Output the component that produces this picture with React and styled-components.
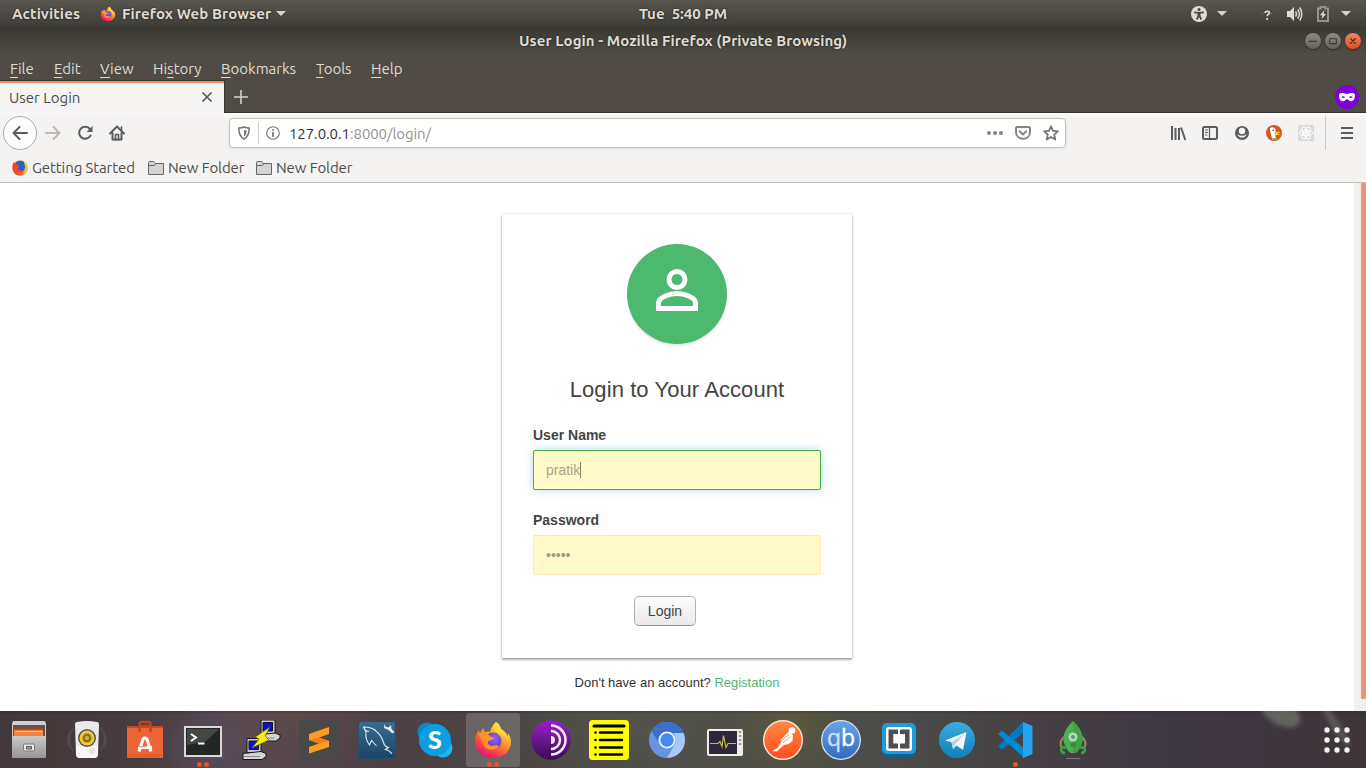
import React from 'react';
import styled, { createGlobalStyle, css } from 'styled-components';

const GlobalStyle = createGlobalStyle`
  *, *::before, *::after { box-sizing: border-box; }
  html, body { margin: 0; padding: 0; overflow: hidden; background: #fff; }
  svg { display: block; flex: none; }
`;

const uiFont = '"Ubuntu", "Noto Sans", "Open Sans", sans-serif';
const pageFont = '"Liberation Sans", Arial, sans-serif';

const Desktop = styled.div`
  width: 1366px;
  height: 768px;
  display: flex;
  flex-direction: column;
  overflow: hidden;
  font-family: ${uiFont};
  font-size: 15px;
  white-space: nowrap;
`;

/* ---------- top panel ---------- */
const Panel = styled.header`
  height: 27px;
  flex: none;
  display: grid;
  grid-template-columns: 1fr 88px 1fr;
  align-items: center;
  background: linear-gradient(#595650, #3f3d38);
  color: #dfdbd2;
  font-weight: 700;
  text-shadow: 0 0 2px rgba(0, 0, 0, 0.7);
`;
const PanelSide = styled.div`
  display: flex;
  align-items: center;
  height: 26px;
  justify-content: ${(p) => (p.$end ? 'flex-end' : 'flex-start')};
`;
const Activities = styled.span`
  width: 88px;
  padding-left: 12px;
  letter-spacing: 0.14px;
`;
const AppMenu = styled.span`
  display: flex;
  align-items: center;
  margin-left: 12px;
`;
const AppName = styled.span`
  width: 149px;
  margin: 0 5px 0 6px;
  letter-spacing: 0.11px;
`;
const Clock = styled.span`
  white-space: pre;
  margin-top: -1px;
`;
const Caret = styled.i`
  width: 0;
  height: 0;
  border: 5px solid transparent;
  border-bottom: 0;
  border-top-color: #d6d2ca;
`;
const StatusGap = styled.span`
  width: ${(p) => p.$w}px;
  flex: none;
`;

/* ---------- window title and menus ---------- */
const TitleBar = styled.div`
  height: 27px;
  flex: none;
  display: grid;
  grid-template-columns: 1fr 328px 1fr;
  align-items: center;
  background: linear-gradient(#393833, #4f4c45);
  color: #dfdbd2;
  font-weight: 700;
  letter-spacing: 0.06px;
  text-shadow: 0 0 2px rgba(0, 0, 0, 0.6);
`;
const WindowButtons = styled.div`
  display: flex;
  justify-content: flex-end;
  gap: 4px;
  padding-right: 5px;
`;
const WindowButton = styled.span`
  width: 16px;
  height: 16px;
  border-radius: 50%;
  display: grid;
  place-items: center;
  background: ${(p) => (p.$close ? 'linear-gradient(#f28561, #e04f1e)' : 'linear-gradient(#8c8981, #65635d)')};
  box-shadow: 0 0 0 0.5px #33312d, 0 1px 1px rgba(0, 0, 0, 0.4);
`;
const MenuBar = styled.nav`
  height: 26px;
  flex: none;
  display: flex;
  align-items: center;
  padding: 2px 0 0 10px;
  background: #504c45;
  color: #dfdbd2;
`;
const MenuItem = styled.span`
  width: ${(p) => p.$w}px;
  u {
    text-underline-offset: 3px;
    text-decoration-thickness: 1px;
  }
`;

/* ---------- tabs ---------- */
const TabStrip = styled.div`
  height: 33px;
  flex: none;
  display: flex;
  background: #504c45;
  box-shadow: inset 0 -1px #38352f;
`;
const Tab = styled.div`
  width: 225px;
  height: 33px;
  display: flex;
  align-items: center;
  justify-content: space-between;
  padding: 0 11px 0 9px;
  border-top: 1px solid #3b3833;
  border-right: 1px solid #38352f;
  background: linear-gradient(#f38764 2px, #f5f4f2 2px);
  color: #4c4c4c;
`;
const NewTab = styled.div`
  width: 32px;
  display: grid;
  place-items: center;
`;
const PrivateBadge = styled.div`
  margin-left: auto;
  padding: 5px 7px 0 0;
`;

/* ---------- navigation ---------- */
const Chrome = styled.div`
  height: 70px;
  flex: none;
  border-bottom: 1px solid #c7c1bc;
  background: linear-gradient(#faf8f8, #f4f3f1 6px);
  color: #4c4c4c;
`;
const NavBar = styled.div`
  height: 40px;
  display: flex;
  align-items: center;
`;
const BackButton = styled.span`
  width: 34px;
  height: 34px;
  margin-left: 3px;
  border: 1px solid #aeaba8;
  border-radius: 50%;
  display: grid;
  place-items: center;
  background: #fdfdfd;
`;
const Slot = styled.span`
  width: ${(p) => p.$w || 32}px;
  height: 32px;
  display: grid;
  place-items: center;
  flex: none;
`;
const UrlBar = styled.div`
  width: 837px;
  height: 30px;
  margin: 0 96px;
  display: flex;
  align-items: center;
  background: #fff;
  border: 1px solid #c6c0bb;
  border-radius: 4px;
  box-shadow: 0 1px 4px rgba(0, 0, 0, 0.06);
`;
const Divider = styled.span`
  width: 1px;
  height: ${(p) => p.$h}px;
  background: #cfccc9;
  flex: none;
`;
const Url = styled.span`
  flex: 1;
  padding: 1px 0 0 2px;
  color: #929292;
  letter-spacing: -0.1px;
  b {
    font-weight: 400;
    color: #333;
  }
`;
const Bookmarks = styled.div`
  height: 29px;
  display: flex;
  align-items: center;
  padding-left: 12px;
`;
const Bookmark = styled.span`
  display: flex;
  align-items: center;
  gap: 4px;
  width: ${(p) => p.$w}px;
  letter-spacing: -0.1px;
`;

/* ---------- web page ---------- */
const Viewport = styled.main`
  height: 528px;
  flex: none;
  display: flex;
  background: #fff;
  font-family: ${pageFont};
`;
const Page = styled.div`
  flex: 1;
  display: flex;
  flex-direction: column;
  align-items: center;
  padding-top: 31px;
`;
const ScrollTrack = styled.div`
  width: 12px;
  padding-left: 7px;
  background: #f1f0ee;
`;
const ScrollThumb = styled.div`
  height: 516px;
  background: #f29170;
  border-radius: 0 0 1px 1px;
`;
const Card = styled.section`
  width: 350px;
  height: 444px;
  padding: 30px 31px;
  display: flex;
  flex-direction: column;
  background: #fff;
  box-shadow: 0 2px 2px rgba(0, 0, 0, 0.3), 0 0 2px rgba(0, 0, 0, 0.22);
  color: #444;
`;
const Avatar = styled.div`
  width: 100px;
  height: 100px;
  margin: 0 auto;
  padding-top: 17px;
  border-radius: 50%;
  display: flex;
  justify-content: center;
  background: #4cb96f;
  box-shadow: 0 2px 2px rgba(0, 0, 0, 0.1);
`;
const Heading = styled.h1`
  margin: 33px 0 0;
  font-size: 22px;
  line-height: 26px;
  font-weight: 400;
  letter-spacing: 0.08px;
  text-align: center;
  color: #444;
`;
const Field = styled.label`
  display: block;
  margin-top: ${(p) => p.$top}px;
  font-size: 14px;
`;
const FieldLabel = styled.span`
  display: block;
  font-weight: 700;
  line-height: 20px;
  margin-bottom: 5px;
`;
const FieldBox = styled.span`
  display: flex;
  align-items: center;
  height: 40px;
  padding: 0 12px;
  border: 1px solid #ffe9b0;
  border-radius: 2px;
  background: #fffac8;
  color: #a39c82;
  ${(p) =>
    p.$focused &&
    css`
      border-color: #3db33f;
      color: #aca68c;
      box-shadow: 0 0 8px rgba(82, 168, 220, 0.45);
    `}
`;
const TextCaret = styled.i`
  width: 1px;
  height: 16px;
  background: #8c8874;
`;
const LoginButton = styled.button`
  width: 62px;
  height: 30px;
  margin: 21px 0 0 101px;
  padding: 0;
  border: 1px solid #b4b2b0;
  border-bottom-color: #929090;
  border-radius: 5px;
  background: linear-gradient(#fdfdfd, #ebe9e9);
  color: #444;
  font: 14px ${pageFont};
`;
const SignupLine = styled.p`
  margin: 17px 0 0;
  font-size: 13px;
  line-height: 15px;
  color: #333;
  a {
    color: #4cb96f;
  }
`;

/* ---------- dock ---------- */
const DockBar = styled.footer`
  position: relative;
  overflow: hidden;
  height: 57px;
  flex: none;
  display: flex;
  align-items: flex-start;
  gap: 4px;
  padding: 2px 2px 0;
  background:
    linear-gradient(rgba(30, 28, 26, 0.28), transparent 3px),
    radial-gradient(ellipse 60px 60px at 790px 12px, rgba(100, 96, 55, 0.65), transparent),
    radial-gradient(ellipse 110px 50px at 620px 20px, rgba(92, 91, 84, 0.55), transparent),
    radial-gradient(ellipse 90px 60px at 290px 10px, rgba(105, 78, 72, 0.5), transparent),
    radial-gradient(ellipse 60px 40px at 215px 35px, rgba(94, 82, 104, 0.6), transparent),
    linear-gradient(90deg, #44383a 0, #463b3d 120px, #534650 230px, #4c4044 400px, #4a4744 560px, #505049 720px, #4c4b48 900px, #453e42 1050px, #3e3843 1180px, #3f3539 1366px);

  /* blurred leaf and grass blade of the wallpaper */
  &::before,
  &::after {
    content: '';
    position: absolute;
    filter: blur(2px);
  }
  &::before {
    left: 1260px;
    top: -10px;
    width: 42px;
    height: 24px;
    border-radius: 50%;
    transform: rotate(28deg);
    background: rgba(124, 128, 116, 0.6);
  }
  &::after {
    left: 1331px;
    top: -12px;
    width: 9px;
    height: 52px;
    border-radius: 50%;
    transform: rotate(-33deg);
    background: rgba(125, 128, 132, 0.42);
  }
`;
const DockTile = styled.div`
  width: 54px;
  height: 54px;
  flex: none;
  display: grid;
  grid-template-rows: 42px 5px;
  justify-items: center;
  padding-top: 7px;
  border-radius: 3px;
  background: ${(p) => (p.$active ? 'rgba(255, 255, 255, 0.18)' : 'transparent')};
`;
const RunDots = styled.div`
  display: flex;
  align-items: flex-start;
  gap: 2px;
  i {
    width: 5px;
    height: 5px;
    border-radius: 50%;
    background: #e95420;
  }
`;
const AppsButton = styled.div`
  margin-left: auto;
  width: 54px;
  height: 54px;
  display: grid;
  place-items: center;
  position: relative;
  z-index: 1;
`;

/* ---------- icons ---------- */
const FirefoxIcon = ({ size }) => (
  <svg width={size} height={size} viewBox="0 0 40 40">
    <defs>
      <linearGradient id="ffBody" x1="0.8" y1="0.05" x2="0.25" y2="0.95">
        <stop offset="0" stopColor="#fff14a" />
        <stop offset="0.4" stopColor="#ffa12b" />
        <stop offset="0.72" stopColor="#ff4a3e" />
        <stop offset="1" stopColor="#e5127e" />
      </linearGradient>
      <radialGradient id="ffGlobe" cx="0.6" cy="0.35" r="0.7">
        <stop offset="0" stopColor="#8e63f5" />
        <stop offset="1" stopColor="#5936b4" />
      </radialGradient>
    </defs>
    <path fill="url(#ffBody)" d="M23 2c3 2 4.500 4.500 5 7 3 1.500 5.500 4 6.500 7 .5-1 .5-2 .3-3C37 16 38 19 38 22c0 9-7.500 16-18 16S2 31 2 22c0-5 1.500-9 4-12 .2 1.500.5 2.500 1 3.500C8 11.500 9 9 10.500 8c0 1.500.5 3 1.500 4 2-.5 3.500-.5 5 0 1-4 3-7.500 6-10Z" />
    <circle cx="20" cy="21" r="8.500" fill="url(#ffGlobe)" />
    <path fill="#ff9129" d="M5 14c4-2 9-1.500 12 2l4 2c-1 2-3 2-4.500 2.500-1.500.5-2 2-1.500 3 .8 1.800 3 3 6 2 2-.6 4-.5 5 .5-3 5-12 5-15 0C8.500 22.500 8 17 5 14Z" />
    <path fill="#ffd83f" d="M23 2c3 2 4.500 4.500 5 7 4 2 7 7 7 13-1-3-3-6-6-8-4-2-7-2-8-4-.8-2 .2-5 2-8Z" />
  </svg>
);

const OldFirefoxIcon = () => (
  <svg width="16" height="16" viewBox="0 0 16 16">
    <defs>
      <linearGradient id="ffOld" x1="1" y1="0" x2="0" y2="0.9">
        <stop offset="0" stopColor="#ffd42e" />
        <stop offset="0.45" stopColor="#ff9418" />
        <stop offset="1" stopColor="#f0214a" />
      </linearGradient>
    </defs>
    <circle cx="8" cy="8" r="7.700" fill="url(#ffOld)" />
    <path d="M4 2.500Q7.500-.5 11.500 1.600q2.500 2.900 1.500 6.400-1.500 4-5 4T4 8.500z" fill="#1966d2" />
    <path fill="#f24528" d="M.6 6.500c0-2 .6-3.500 1.500-4.500.2 1.200 1 1.500 2 1.700l2 .3C5 5 5.500 6 7.500 6.500 6 7.200 5.500 8 6 9c1 1.600 3.400 1.200 4.500.5-.5 2-2 2.700-3.500 2.700C3.500 12.200 1 10 .6 6.500Z" />
    <path fill="#ffbf26" d="M11.500 1.500c3.800 2 5 6.500 3.400 9.700-1 2-2.900 3.200-4.900 3.600 2.300-1.800 3.500-4.500 3-7.500-.2-2-.7-4.300-1.500-5.800Z" />
  </svg>
);

const AccessIcon = () => (
  <svg width="16" height="16" viewBox="0 0 16 16">
    <circle cx="8" cy="8" r="8" fill="#dfdbd2" />
    <circle cx="8" cy="3.500" r="1.500" fill="#484641" />
    <path d="M3.200 6.300 8 6.900l4.800-.6M8 6.500V10M8 9l-2.300 4.500M8 9l2.300 4.500" stroke="#484641" strokeWidth="1.700" fill="none" />
    <path d="M6.600 6.500h2.800v3.700H6.600z" fill="#484641" />
  </svg>
);
const VolumeIcon = () => (
  <svg width="16" height="16" viewBox="0 0 16 16" fill="none" stroke="#dfdbd2" strokeWidth="1.500">
    <path d="M0 5h3l4-4v14l-4-4H0z" fill="#dfdbd2" stroke="none" />
    <path d="M8.500 5.500q2 2.500 0 5M10.700 3.500q3.400 4.500 0 9M12.800 1.500q4 6.500 0 13" />
  </svg>
);
const BatteryIcon = () => (
  <svg width="12" height="16" viewBox="0 0 12 16">
    <path d="M3.500 1v1.500H1V15h10V2.500H8.500V1z" fill="none" stroke="#96938c" strokeWidth="2" />
    <path d="M7.500 4 3 9.200h2.500L4.500 13 9 8H6.500z" fill="#e9e5dd" />
  </svg>
);
const MaskIcon = () => (
  <svg width="24" height="24" viewBox="0 0 24 24">
    <circle cx="12" cy="12" r="12" fill="#8000d7" />
    <path fillRule="evenodd" fill="#fff" d="M4 10C4 8.300 6 8 8 8c1.700 0 2.800.9 4 .9S14.300 8 16 8c2 0 4 .3 4 2 0 3.500-1.300 6.300-4 6.300-1.900 0-2.700-2-4-2s-2.100 2-4 2C5.300 16.300 4 13.500 4 10Zm2.300 2.300c1.300 1 2.700 1 3.900 0-1.100-1.500-2.800-1.500-3.900 0Zm7.500 0c1.200 1 2.600 1 3.900 0-1.100-1.500-2.800-1.500-3.900 0Z" />
  </svg>
);
const Glyph = ({ children, color = '#5c5c5c', size = 16, sw = 2 }) => (
  <svg width={size} height={size} viewBox="0 0 16 16" fill="none" stroke={color} strokeWidth={sw} strokeLinecap="round" strokeLinejoin="round">
    {children}
  </svg>
);
const FolderIcon = () => (
  <svg width="16" height="14" viewBox="0 0 16 14">
    <path d="M.5 13.500V1.500q0-1 1-1h4q.7 0 1 1l.5 1h8.500v11z" fill="#d5d3d1" stroke="#666" />
    <path d="M1 4.500h5.500l1-1.500" fill="none" stroke="#666" />
  </svg>
);
const DuckIcon = () => (
  <svg width="16" height="16" viewBox="0 0 16 16">
    <circle cx="8" cy="8" r="8" fill="#de4f2c" />
    <path d="M3.800 3.800c1.200-2.300 4.900-1.800 5.700.7.600 2-.3 3.500-.3 5l1 4.500-3.700.5C5.500 12 4.700 9 4.300 6.500Z" fill="#fff" />
    <path d="M8.500 7.500c1.500-.7 4-.9 5.500-.4-.5 1.200-2 1.200-3 1.500 1 .5 2 .5 2.800.3-.5 1.500-3.500 1.400-4.900.6z" fill="#fdd20a" />
    <path d="m6.500 13.300 5-.6-.2 2.300-4.500.4z" fill="#65bc46" />
    <circle cx="7.200" cy="5.300" r=".8" fill="#2d4f8e" />
  </svg>
);
const ReactIcon = () => (
  <svg width="16" height="16" viewBox="0 0 16 16" fill="none" stroke="#fff" strokeWidth="1">
    <path fill="#dcdcdb" stroke="none" d="M0 0h16v16H0z" />
    <ellipse cx="8" cy="8" rx="6.700" ry="2.700" />
    <ellipse cx="8" cy="8" rx="6.700" ry="2.700" transform="rotate(60 8 8)" />
    <ellipse cx="8" cy="8" rx="6.700" ry="2.700" transform="rotate(120 8 8)" />
    <circle cx="8" cy="8" r="1.300" fill="#fff" />
  </svg>
);

const Art = ({ children }) => (
  <svg width="40" height="40" viewBox="0 0 40 40">
    {children}
  </svg>
);

const FilesArt = () => (
  <Art>
    <defs>
      <linearGradient id="files" x1="0" y1="0" x2="0" y2="1">
        <stop offset="0" stopColor="#c9c9c9" />
        <stop offset="1" stopColor="#969696" />
      </linearGradient>
    </defs>
    <path d="M4 1h32l1 3v14H3V4z" fill="#cfcfcf" />
    <path d="M4 5h32v12H4z" fill="#5a5452" />
    <path d="M5 8h29l1 9H5z" fill="#a84a22" />
    <path d="M5 10h29v8H5z" fill="#f08642" />
    <path d="M7 11h26v1H7z" fill="#ffc49a" />
    <path d="M3 16h34v21q0 1-1 1H4q-1 0-1-1z" fill="url(#files)" />
    <rect x="14.500" y="24" width="11" height="7" rx="1" fill="#e8e8e8" stroke="#777" />
    <path d="M17.500 26.500h5v2.500h-5z" fill="#aaa" stroke="#555" />
  </Art>
);
const SpeakerArt = () => (
  <Art>
    <g fill="none" stroke="#5a7395" strokeWidth="1.200" opacity=".4">
      <path d="M6 8Q-1 19 6 31M3 12Q-1 19 3 28M34 8q7 11 0 23M37 12q4 8 0 16" />
    </g>
    <path d="M10 2q10-2 20 0 2 0 2 3l-1 29q0 4-4 4H13q-4 0-4-4L8 5q0-3 2-3z" fill="#e9e9e9" />
    <path d="M9 26h22v8q0 4-4 4H13q-4 0-4-4z" fill="#f8f8f8" />
    <circle cx="20" cy="18" r="9" fill="#555" />
    <circle cx="20" cy="18" r="7.500" fill="#f2ca2c" />
    <circle cx="20" cy="18" r="4.500" fill="#8b7416" />
    <circle cx="20" cy="18" r="2" fill="#c7b566" />
    <circle cx="25" cy="31" r="3.300" fill="#e4e4e4" />
  </Art>
);
const StoreArt = () => (
  <Art>
    <path d="M2 6.500h36V38H2z" fill="#eb6536" />
    <path d="M2 6.500h36v1.500H2z" fill="#c94a20" />
    <path d="M14.500 12V4q0-2 2-2h7q2 0 2 2v8M16 6h8" fill="none" stroke="#c5441d" strokeWidth="2.400" />
    <path d="m14 31.500 4-12.300q.5-1.200 2-1.200t2 1.200l4 12.300" fill="none" stroke="#fff" strokeWidth="3" />
    <path d="M13 27.500h14" stroke="#fff" strokeWidth="3" />
    <path d="M13 26.700h9" stroke="#eb6536" strokeWidth=".8" />
    <path d="M2 34h36v4H2z" fill="#e85a2c" opacity=".6" />
  </Art>
);
const TerminalArt = () => (
  <Art>
    <path d="M1 6h38v31H1z" fill="#dad9d7" />
    <path d="M3 8h34v27H3z" fill="#222625" />
    <path d="M4 9h32L22 22 4 25z" fill="#434746" />
    <path d="m8 14 5 3.500L8 21" fill="none" stroke="#fff" strokeWidth="2" />
    <path d="M15 23.500h6.500" stroke="#fff" strokeWidth="2" />
  </Art>
);
const PuttyPc = ({ x, y }) => (
  <g transform={`translate(${x} ${y})`} stroke="#161616">
    <path d="M6 1h14v14H6z" fill="#c9c9c9" />
    <path d="M8 3.500h9.500v8.500H8z" fill="#0d0de3" />
    <path d="m2 16 18-2 5 2v3l-4 3H2z" fill="#d5d5d5" />
    <path d="M3 19h16" stroke="#888" />
  </g>
);
const PuttyArt = () => (
  <Art>
    <PuttyPc x="14" y="-1" />
    <PuttyPc x="0" y="17.500" />
    <path d="M29 7 14 17l4 2-7 9 17-8-4-4z" fill="#f7ed13" stroke="#5a5700" strokeWidth=".7" />
  </Art>
);
const SublimeArt = () => (
  <Art>
    <rect width="40" height="40" rx="2" fill="#494949" />
    <path d="m10 14 20-7v7l-10 3.500 10 3.500v6L10 33.500V27l10-3.500L10 20z" fill="#ff9b22" />
    <path d="m10 20 10-2.500L30 21l-10 2.500z" fill="#ef8118" />
  </Art>
);
const WorkbenchArt = () => (
  <Art>
    <defs>
      <linearGradient id="wb" x1="0" y1="0" x2="0" y2="1">
        <stop offset="0" stopColor="#3a6b91" />
        <stop offset="1" stopColor="#184667" />
      </linearGradient>
    </defs>
    <rect x="1.500" y="1.500" width="37" height="37" rx="3" fill="url(#wb)" stroke="#264d69" />
    <path d="M35 34q-3-4-6.500-4.500l3-2q-4-1-5-5-2-7-7.500-11.500-4-4-12.500-4 1 2 2.500 5-1 7 3.500 13l2-4.500 5 5.500M7 8q2 4 5 3" fill="none" stroke="#dceaf2" strokeWidth="1.100" />
    <path d="m27.500 4 1 2.500 3 1L34 5l.5 4 3 3-2 1.500-4-3.500-4.500-2z" fill="#eee" />
  </Art>
);
const SkypeArt = () => (
  <Art>
    <circle cx="12" cy="12" r="9.500" fill="#0b86cc" />
    <circle cx="28" cy="28" r="9.500" fill="#21b5f0" />
    <circle cx="20" cy="20" r="16" fill="#0b9fe2" />
    <text x="20" y="29" textAnchor="middle" fontFamily="Lato, sans-serif" fontWeight="900" fontSize="25" fill="#fff">S</text>
  </Art>
);
const TorArt = () => (
  <Art>
    <defs>
      <linearGradient id="tor" x1="0" y1="0" x2="0" y2="1">
        <stop offset="0" stopColor="#9b1fcd" />
        <stop offset="1" stopColor="#3b0c4f" />
      </linearGradient>
    </defs>
    <circle cx="20" cy="20" r="19.800" fill="url(#tor)" />
    <path d="M20 5.500a14.500 14.500 0 0 1 0 29M20 11a9 9 0 0 1 0 18" fill="none" stroke="#f5e9fa" strokeWidth="2.500" />
    <path d="M20 16a4 4 0 0 1 0 8z" fill="#f5e9fa" />
  </Art>
);
const NotesArt = () => (
  <Art>
    <rect width="40" height="40" rx="3.500" fill="#ff0" />
    <g stroke="#000" strokeWidth="2.500" strokeLinecap="round">
      <path d="M5 6h30" strokeWidth="3" />
      <path d="M11 12.500h22M11 20h22M11 27.500h22M11 34.500h22M6.500 12.500h.1M6.500 20h.1M6.500 27.500h.1M6.500 34.500h.1" />
    </g>
  </Art>
);
const ChromiumArt = () => (
  <Art>
    <circle cx="20" cy="20" r="18" fill="#6795df" />
    <path d="M4.400 11A18 18 0 0 1 35.600 11L36.500 13H20L11.500 22z" fill="#3a70c9" />
    <path d="M36.500 13A18 18 0 0 1 20 38l8-14q2-4-1-11z" fill="#a7c9fa" />
    <circle cx="20" cy="20" r="8.500" fill="#edf3ff" />
    <circle cx="20" cy="20" r="6.700" fill="#4789ef" />
  </Art>
);
const MonitorArt = () => (
  <Art>
    <rect x="2" y="9" width="36" height="27" rx="2" fill="#f0eee9" />
    <path d="M4 11h28v23H4z" fill="#2e273b" />
    <path d="M5 23.500h8l2-2 2 5 1.500-11 2.500 12 2-4h8" fill="none" stroke="#c9bd3e" strokeWidth="1.200" />
    <path d="M35 11v16" stroke="#999" strokeWidth="2.400" strokeDasharray="2 2" />
  </Art>
);
const PostmanArt = () => (
  <Art>
    <defs>
      <linearGradient id="pm" x1="0" y1="0" x2="0" y2="1">
        <stop offset="0" stopColor="#ff8a3c" />
        <stop offset="1" stopColor="#ff4d21" />
      </linearGradient>
    </defs>
    <circle cx="20" cy="20" r="19.300" fill="url(#pm)" stroke="#f8e9df" strokeWidth="1.400" />
    <circle cx="29" cy="10.500" r="3.300" fill="#fff" />
    <path d="m25.500 12 4.500 3-.5 6-4 3-4.500 1-7.500 6.500-4.500-.5 5.500-3 4-6-1-2z" fill="#fff" />
    <path d="m18 21 8-6.500m-6.500 8.500 8-6.500" stroke="#ef6c3b" strokeWidth=".7" />
  </Art>
);
const QbArt = () => (
  <Art>
    <defs>
      <linearGradient id="qb" x1="0" y1="0" x2="0" y2="1">
        <stop offset="0" stopColor="#6da3e6" />
        <stop offset="1" stopColor="#336abf" />
      </linearGradient>
    </defs>
    <circle cx="20" cy="20" r="19.300" fill="url(#qb)" stroke="#d6e2f1" strokeWidth="1.300" />
    <text x="20" y="26" textAnchor="middle" fontFamily="'Open Sans', sans-serif" fontSize="23" fill="#fff" stroke="#fff" strokeWidth=".4">
      <tspan fill="#c9e0fa" stroke="#c9e0fa">q</tspan>b
    </text>
  </Art>
);
const BracketsArt = () => (
  <Art>
    <rect x="3" y="4" width="34" height="33" rx="5" fill="#0a6296" />
    <rect x="3" y="3" width="34" height="31" rx="5" fill="#1c9de0" />
    <rect x="7" y="7" width="26" height="24" rx="3" fill="#fff" />
    <path d="M9.500 9.500h9.500v4.500h-4.700v9.500H19V28.500H9.500zM30.500 9.500H21v4.500h5v9.500h-5v5h9.500z" fill="#4d4f50" />
  </Art>
);
const TelegramArt = () => (
  <Art>
    <defs>
      <linearGradient id="tg" x1="0" y1="0" x2="0" y2="1">
        <stop offset="0" stopColor="#37aee2" />
        <stop offset="1" stopColor="#1280b9" />
      </linearGradient>
    </defs>
    <circle cx="20" cy="20" r="18" fill="url(#tg)" />
    <path d="M8 20.500 29.500 12 26 30l-6.500-4.500-3.500 3.500-1.500-7z" fill="#f4f8fb" />
    <path d="m14.500 22 13-8-9 10-2.500 5z" fill="#b9d4e4" />
  </Art>
);
const CodeArt = () => (
  <Art>
    <path d="m28 2v11L7 29.500 3 26.500z" fill="#0079c5" />
    <path d="m3 14 4-3.500L29 28v10z" fill="#0089d7" />
    <path d="M28 2 37.500 6v28L28 38z" fill="#24a4ee" />
  </Art>
);
const RocketArt = () => (
  <Art>
    <path d="M12 16q-7 5-3 13M28 16q7 5 3 13" fill="none" stroke="#9d8b5f" strokeWidth="2" />
    <path d="M20 1q17 16 4 31l-2 1h-4l-2-1Q3 17 20 1z" fill="#4caf50" />
    <path d="M20 1q17 16 4 31l-4 1z" fill="#43a047" />
    <circle cx="20" cy="17" r="4.500" fill="#b6d9c1" />
    <circle cx="20" cy="17" r="2" fill="#559d7b" />
    <path d="M17 24h6M18 26h4" stroke="#226b2b" />
    <path d="M13 28q-4-2-5 2 1 3 4 3M27 28q4-2 5 2-1 3-4 3" fill="none" stroke="#35a43e" strokeWidth="2.600" />
    <path d="M13 38.500h14" stroke="#77747a" />
  </Art>
);

const dockApps = [
  { name: 'files', art: <FilesArt /> },
  { name: 'music', art: <SpeakerArt /> },
  { name: 'store', art: <StoreArt /> },
  { name: 'terminal', art: <TerminalArt />, running: 2 },
  { name: 'putty', art: <PuttyArt /> },
  { name: 'sublime', art: <SublimeArt /> },
  { name: 'workbench', art: <WorkbenchArt /> },
  { name: 'skype', art: <SkypeArt /> },
  { name: 'firefox', art: <FirefoxIcon size={40} />, running: 2, active: true },
  { name: 'tor', art: <TorArt /> },
  { name: 'notes', art: <NotesArt /> },
  { name: 'chromium', art: <ChromiumArt /> },
  { name: 'monitor', art: <MonitorArt /> },
  { name: 'postman', art: <PostmanArt /> },
  { name: 'qbittorrent', art: <QbArt /> },
  { name: 'brackets', art: <BracketsArt /> },
  { name: 'telegram', art: <TelegramArt /> },
  { name: 'vscode', art: <CodeArt />, running: 1 },
  { name: 'rocket', art: <RocketArt /> },
];

const TopPanel = () => (
  <Panel>
    <PanelSide>
      <Activities>Activities</Activities>
      <AppMenu>
        <FirefoxIcon size={16} />
        <AppName>Firefox Web Browser</AppName>
        <Caret />
      </AppMenu>
    </PanelSide>
    <Clock>{'Tue  5:40 PM'}</Clock>
    <PanelSide $end>
      <AccessIcon />
      <StatusGap $w={10} />
      <Caret />
      <StatusGap $w={35} />
      <svg width="10" height="14" viewBox="0 0 10 14" fill="none" stroke="#dfdbd2" strokeWidth="1.700">
        <path d="M3 6q.2-1.700 2.200-1.700 2.200 0 2.200 1.600 0 1-1.300 1.700-.9.500-.9 1.700M5.200 11v2" />
        <path d="M0 6.500h1M9 6.500h1" strokeWidth="1" opacity=".4" />
      </svg>
      <StatusGap $w={15} />
      <VolumeIcon />
      <StatusGap $w={14} />
      <BatteryIcon />
      <StatusGap $w={12} />
      <Caret />
      <StatusGap $w={15} />
    </PanelSide>
  </Panel>
);

const Browser = () => (
  <>
    <TitleBar>
      <span />
      <span>User Login - Mozilla Firefox (Private Browsing)</span>
      <WindowButtons>
        <WindowButton>
          <Glyph color="#3c3b37" size={12} sw={1.4}><path d="M3 8.500h10" /></Glyph>
        </WindowButton>
        <WindowButton>
          <Glyph color="#3c3b37" size={12} sw={1.4}><path d="M3.500 5h9v6.500h-9z" /></Glyph>
        </WindowButton>
        <WindowButton $close>
          <Glyph color="#4a2617" size={12} sw={1.6}><path d="m5 5 6 6m0-6-6 6" /></Glyph>
        </WindowButton>
      </WindowButtons>
    </TitleBar>
    <MenuBar>
      <MenuItem $w={44}><u>F</u>ile</MenuItem>
      <MenuItem $w={46}><u>E</u>dit</MenuItem>
      <MenuItem $w={53}><u>V</u>iew</MenuItem>
      <MenuItem $w={68}>Hi<u>s</u>tory</MenuItem>
      <MenuItem $w={95}><u>B</u>ookmarks</MenuItem>
      <MenuItem $w={55}><u>T</u>ools</MenuItem>
      <MenuItem $w={40}><u>H</u>elp</MenuItem>
    </MenuBar>
    <TabStrip>
      <Tab>
        <span>User Login</span>
        <svg width="12" height="12" viewBox="0 0 12 12" stroke="#555" strokeWidth="1.600">
          <path d="m1.500 1.500 9 9m0-9-9 9" />
        </svg>
      </Tab>
      <NewTab>
        <svg width="14" height="14" viewBox="0 0 14 14" stroke="#d5d2cc" strokeWidth="1.600">
          <path d="M7 0v14M0 7h14" />
        </svg>
      </NewTab>
      <PrivateBadge><MaskIcon /></PrivateBadge>
    </TabStrip>
    <Chrome>
      <NavBar>
        <BackButton>
          <Glyph><path d="M15 8H1.500M7.500 2 1.500 8l6 6" /></Glyph>
        </BackButton>
        <Slot><Glyph color="#bcbab9"><path d="M1 8h13.500M8.500 2l6 6-6 6" /></Glyph></Slot>
        <Slot><Glyph><path d="M13.500 10.500A6 6 0 1 1 13 4.200" /><path d="M15.500 1v6H9.500z" fill="#5c5c5c" stroke="none" /></Glyph></Slot>
        <Slot>
          <Glyph>
            <path d="M1 8.500 8 1.500l7 7M3.500 8v6.500h9V8" />
            <path d="M6.500 15V9.500h3V15M12.500 2v3" strokeWidth="1.600" />
          </Glyph>
        </Slot>
        <UrlBar>
          <Slot $w={28}>
            <Glyph color="#757575" size={14} sw={1.8}>
              <path d="M8 1.200c2 .9 4 1.200 6 1.200 0 6-1 10-6 12.400C3 12.400 2 8.400 2 2.400c2 0 4-.3 6-1.200Z" />
              <path d="M8 4.300v7.700c-2-1.300-3-3.700-3-7 1 0 2-.2 3-.7Z" fill="#fff" stroke="none" />
              <path d="M8 4.300v7.700c2-1.300 3-3.700 3-7-1 0-2-.2-3-.7Z" fill="#757575" stroke="none" />
            </Glyph>
          </Slot>
          <Divider $h={22} />
          <Slot $w={28}>
            <Glyph color="#757575" size={14} sw={1.300}>
              <circle cx="8" cy="8" r="7.200" />
              <path d="M8 7.500v4.200M8 4.300v.4" strokeWidth="2" />
            </Glyph>
          </Slot>
          <Url><b>127.0.0.1</b>:8000/login/</Url>
          <Slot $w={28}>
            <svg width="16" height="4" viewBox="0 0 16 4" fill="#858585">
              <circle cx="2" cy="2" r="2" /><circle cx="8" cy="2" r="2" /><circle cx="14" cy="2" r="2" />
            </svg>
          </Slot>
          <Slot $w={28}>
            <Glyph color="#858585">
              <path d="M2 2h12q1 0 1 1v4c0 9-14 9-14 0V3q0-1 1-1Z" />
              <path d="M4.700 6.300 8 9.400l3.300-3.100" />
            </Glyph>
          </Slot>
          <Slot $w={28}>
            <Glyph color="#757575" sw={1.800}>
              <path d="m8 1.300 2 4.500 4.900.5-3.700 3.300 1.100 4.900L8 12l-4.300 2.500 1.100-4.900L1.100 6.300 6 5.800z" />
            </Glyph>
          </Slot>
        </UrlBar>
        <Slot>
          <svg width="16" height="16" viewBox="0 0 16 16" stroke="#5c5c5c" strokeWidth="2">
            <path d="M2 1v14M5.500 3v12M9 3v12M11 2.500 15.300 15" />
          </svg>
        </Slot>
        <Slot>
          <Glyph>
            <rect x="1" y="2" width="14" height="12" rx="1.500" />
            <path d="M7.500 2.500v11" strokeWidth="1.200" />
            <path d="M3.500 5h2M3.500 7.500h2M3.500 10h1.500" strokeWidth="1" />
          </Glyph>
        </Slot>
        <Slot>
          <svg width="16" height="16" viewBox="0 0 16 16">
            <circle cx="8" cy="8" r="7" fill="#5c5c5c" />
            <circle cx="8" cy="6" r="3.200" fill="#f4f3f1" />
            <path d="M3.300 9.200q4.700 3 9.400 0-1.200 3.400-4.700 3.400T3.300 9.200Z" fill="#f4f3f1" />
          </svg>
        </Slot>
        <Slot><DuckIcon /></Slot>
        <Slot><ReactIcon /></Slot>
        <StatusGap $w={3} />
        <Divider $h={34} />
        <StatusGap $w={5} />
        <Slot>
          <svg width="12" height="12" viewBox="0 0 12 12" stroke="#5c5c5c" strokeWidth="2">
            <path d="M0 1h12M0 6h12M0 11h12" />
          </svg>
        </Slot>
      </NavBar>
      <Bookmarks>
        <Bookmark $w={136}><OldFirefoxIcon />Getting Started</Bookmark>
        <Bookmark $w={108}><FolderIcon />New Folder</Bookmark>
        <Bookmark $w={108}><FolderIcon />New Folder</Bookmark>
      </Bookmarks>
    </Chrome>
  </>
);

const LoginPage = () => (
  <Viewport>
    <Page>
      <Card>
        <Avatar>
          <svg width="56" height="56" viewBox="0 0 56 56" fill="none" stroke="#fff" strokeWidth="5">
            <circle cx="28" cy="18.500" r="8" />
            <path d="M9.500 47.500v-5.500c0-6 12-9.500 18.500-9.500s18.500 3.500 18.500 9.500v5.500z" />
          </svg>
        </Avatar>
        <Heading>Login to Your Account</Heading>
        <Field $top={22}>
          <FieldLabel>User Name</FieldLabel>
          <FieldBox $focused>pratik<TextCaret /></FieldBox>
        </Field>
        <Field $top={20}>
          <FieldLabel>Password</FieldLabel>
          <FieldBox>•••••</FieldBox>
        </Field>
        <LoginButton>Login</LoginButton>
      </Card>
      <SignupLine>Don't have an account? <a>Registation</a></SignupLine>
    </Page>
    <ScrollTrack><ScrollThumb /></ScrollTrack>
  </Viewport>
);

const Dock = () => (
  <DockBar>
    {dockApps.map((app) => (
      <DockTile key={app.name} $active={app.active}>
        {app.art}
        <RunDots>
          {Array.from({ length: app.running || 0 }, (_, i) => <i key={i} />)}
        </RunDots>
      </DockTile>
    ))}
    <AppsButton>
      <svg width="26" height="26" viewBox="0 0 26 26" fill="#f2f2f2">
        {[3, 13, 23].map((y) => [3, 13, 23].map((x) => <circle key={`${x}-${y}`} cx={x} cy={y} r="2.700" />))}
      </svg>
    </AppsButton>
  </DockBar>
);

export default function App() {
  return (
    <Desktop>
      <GlobalStyle />
      <TopPanel />
      <Browser />
      <LoginPage />
      <Dock />
    </Desktop>
  );
}
